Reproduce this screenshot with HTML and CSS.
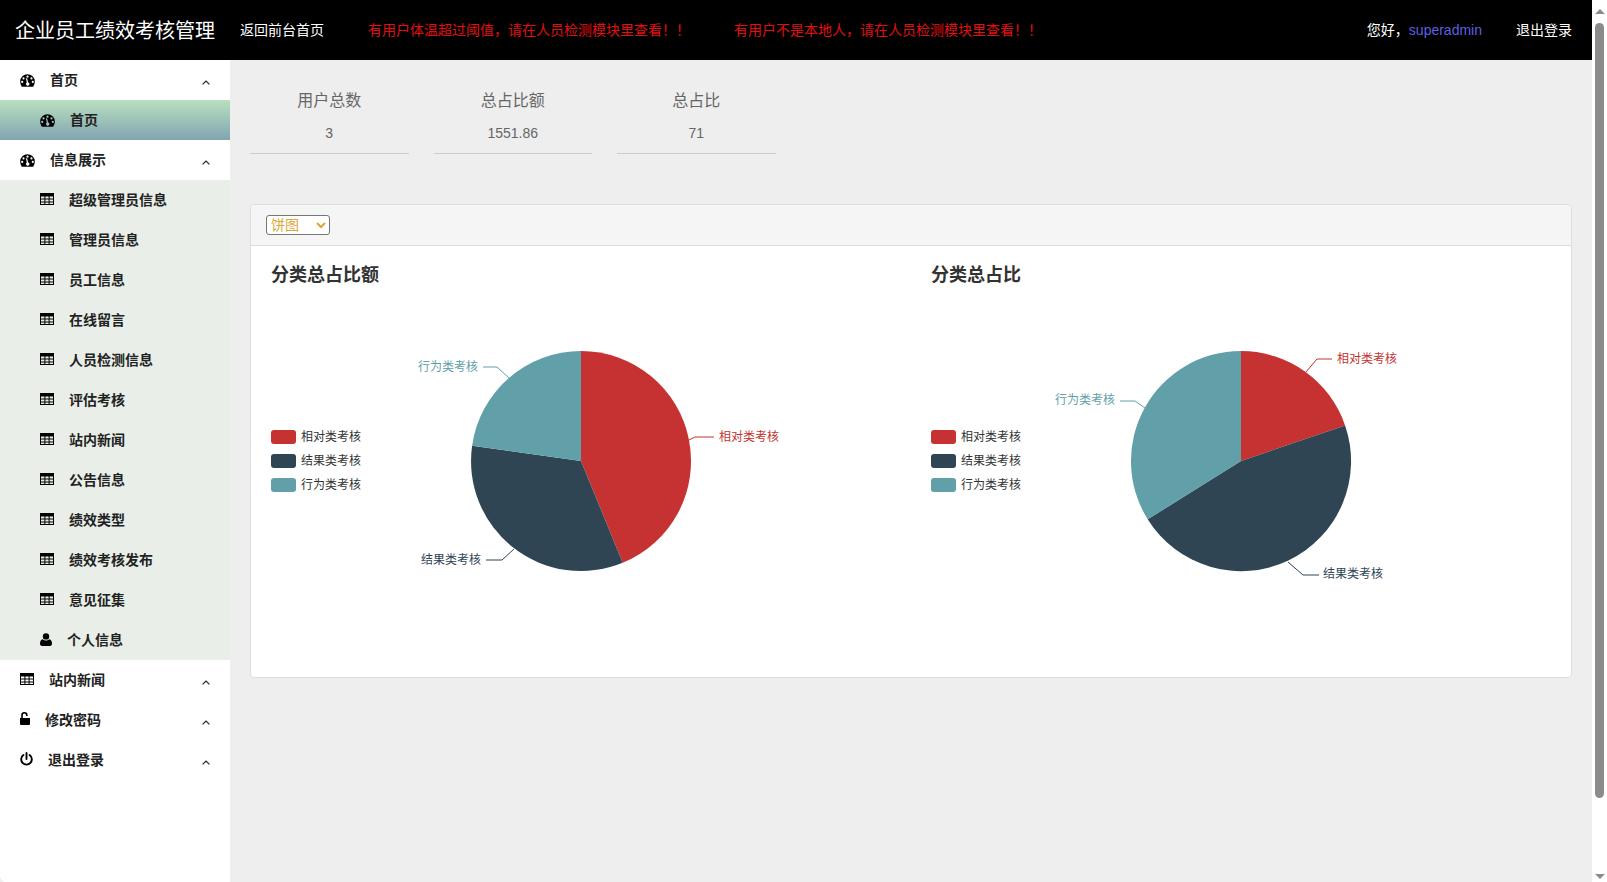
FILE: index.html
```html
<!DOCTYPE html>
<html lang="zh-CN">
<head>
  <meta charset="UTF-8">
  <title>企业员工绩效考核管理</title>
  <link rel="stylesheet" href="styles.css">
</head>
<body>
  <svg class="defs" width="0" height="0">
    <symbol id="i-gauge" viewBox="0 0 15 13">
      <path fill-rule="evenodd" d="M7.5 .2A7.3 7.3 0 0 0 .2 7.5c0 2 .6 3.9 1.8 5.3h11c1.2-1.4 1.8-3.3 1.8-5.3A7.3 7.3 0 0 0 7.5 .2zM7.5 1.6a1.1 1.1 0 1 1 0 2.2a1.1 1.1 0 1 1 0-2.2zM3.5 3.3a1.1 1.1 0 1 1 0 2.2a1.1 1.1 0 1 1 0-2.2zM11.5 3.3a1.1 1.1 0 1 1 0 2.2a1.1 1.1 0 1 1 0-2.2zM2.2 6.8a1.1 1.1 0 1 1 0 2.2a1.1 1.1 0 1 1 0-2.2zM12.8 6.8a1.1 1.1 0 1 1 0 2.2a1.1 1.1 0 1 1 0-2.2zM5.9 4.4l.9 4.2a1.7 1.7 0 1 0 1.3-.2l-1-4.2z"/>
    </symbol>
    <symbol id="i-table" viewBox="0 0 14 12">
      <path fill-rule="evenodd" d="M0 0h14v12H0zM1 3.5v2h3.4v-2zM5.4 3.5v2h3.2v-2zM9.6 3.5v2H13v-2zM1 6.5v2h3.4v-2zM5.4 6.5v2h3.2v-2zM9.6 6.5v2H13v-2zM1 9.5V11h3.4V9.5zM5.4 9.5V11h3.2V9.5zM9.6 9.5V11H13V9.5z"/>
    </symbol>
    <symbol id="i-user" viewBox="0 0 12 13">
      <circle cx="6" cy="3.4" r="3.2"/>
      <path d="M2.6 6.2C3.5 7 4.7 7.4 6 7.4s2.500-.4 3.400-1.200c1.700.3 2.600 2 2.600 4.600 0 1.300-.8 2.200-2 2.200H2c-1.200 0-2-.9-2-2.200 0-2.600.9-4.300 2.600-4.600z"/>
    </symbol>
    <symbol id="i-unlock" viewBox="0 0 10 13">
      <path d="M0 6h10v6a1 1 0 0 1-1 1H1a1 1 0 0 1-1-1z"/>
      <path d="M2 6V3.200a2.400 2.400 0 0 1 4.800 0V4" fill="none" stroke="#000" stroke-width="1.600"/>
    </symbol>
    <symbol id="i-power" viewBox="0 0 13 14">
      <path d="M3.400 3a5.300 5.300 0 1 0 6.200 0" fill="none" stroke="#000" stroke-width="1.900" stroke-linecap="round"/>
      <path d="M6.500 1v6" fill="none" stroke="#000" stroke-width="1.900" stroke-linecap="round"/>
    </symbol>
    <symbol id="i-up" viewBox="0 0 8 5">
      <path d="M.6 4.400L4 1l3.400 3.400" fill="none" stroke="#222" stroke-width="1.200"/>
    </symbol>
  </svg>

  <div class="app">
    <div class="page">
      <header class="topbar">
        <div class="brand">企业员工绩效考核管理</div>
        <a class="toplink">返回前台首页</a>
        <span class="warn warn-first">有用户体温超过阈值，请在人员检测模块里查看！！</span>
        <span class="warn warn-second">有用户不是本地人，请在人员检测模块里查看！！</span>
        <div class="userbox">
          <span>您好，<span class="username">superadmin</span></span>
          <a class="toplink">退出登录</a>
        </div>
      </header>

      <div class="layout">
        <nav class="sidebar">
          <a class="menu-item"><svg class="ic ic-gauge"><use href="#i-gauge"/></svg>首页<svg class="up"><use href="#i-up"/></svg></a>
          <div class="submenu">
            <a class="menu-item active"><svg class="ic ic-gauge"><use href="#i-gauge"/></svg>首页</a>
          </div>
          <a class="menu-item"><svg class="ic ic-gauge"><use href="#i-gauge"/></svg>信息展示<svg class="up"><use href="#i-up"/></svg></a>
          <div class="submenu">
            <a class="menu-item"><svg class="ic ic-table"><use href="#i-table"/></svg>超级管理员信息</a>
            <a class="menu-item"><svg class="ic ic-table"><use href="#i-table"/></svg>管理员信息</a>
            <a class="menu-item"><svg class="ic ic-table"><use href="#i-table"/></svg>员工信息</a>
            <a class="menu-item"><svg class="ic ic-table"><use href="#i-table"/></svg>在线留言</a>
            <a class="menu-item"><svg class="ic ic-table"><use href="#i-table"/></svg>人员检测信息</a>
            <a class="menu-item"><svg class="ic ic-table"><use href="#i-table"/></svg>评估考核</a>
            <a class="menu-item"><svg class="ic ic-table"><use href="#i-table"/></svg>站内新闻</a>
            <a class="menu-item"><svg class="ic ic-table"><use href="#i-table"/></svg>公告信息</a>
            <a class="menu-item"><svg class="ic ic-table"><use href="#i-table"/></svg>绩效类型</a>
            <a class="menu-item"><svg class="ic ic-table"><use href="#i-table"/></svg>绩效考核发布</a>
            <a class="menu-item"><svg class="ic ic-table"><use href="#i-table"/></svg>意见征集</a>
            <a class="menu-item"><svg class="ic ic-user"><use href="#i-user"/></svg>个人信息</a>
          </div>
          <a class="menu-item"><svg class="ic ic-table"><use href="#i-table"/></svg>站内新闻<svg class="up"><use href="#i-up"/></svg></a>
          <a class="menu-item"><svg class="ic ic-unlock"><use href="#i-unlock"/></svg>修改密码<svg class="up"><use href="#i-up"/></svg></a>
          <a class="menu-item"><svg class="ic ic-power"><use href="#i-power"/></svg>退出登录<svg class="up"><use href="#i-up"/></svg></a>
        </nav>

        <main class="content">
          <div class="stats">
            <div class="stat"><div class="stat-title">用户总数</div><div class="stat-value">3</div></div>
            <div class="stat"><div class="stat-title">总占比额</div><div class="stat-value">1551.86</div></div>
            <div class="stat"><div class="stat-title">总占比</div><div class="stat-value">71</div></div>
          </div>

          <section class="card">
            <div class="card-head">
              <select class="chart-type">
                <option>饼图</option>
                <option>柱状图</option>
              </select>
            </div>
            <div class="card-body">
              <div class="chart">
                <h3 class="chart-title">分类总占比额</h3>
                <svg class="pie" viewBox="0 0 640 357">
                  <rect x="0" y="130" width="25" height="14" rx="3" fill="#c63232"/>
                  <rect x="0" y="154" width="25" height="14" rx="3" fill="#2f4554"/>
                  <rect x="0" y="178" width="25" height="14" rx="3" fill="#61a0a8"/>
                  <text class="legend" x="30" y="141">相对类考核</text>
                  <text class="legend" x="30" y="165">结果类考核</text>
                  <text class="legend" x="30" y="189">行为类考核</text>
                  <path d="M310 161V51A110 110 0 0 1 351.700 262.800z" fill="#c63232"/>
                  <path d="M310 161L351.700 262.800A110 110 0 0 1 201.100 145.700z" fill="#2f4554"/>
                  <path d="M310 161L201.100 145.700A110 110 0 0 1 310 51z" fill="#61a0a8"/>
                  <path class="leader" d="M418 140l6-3h19" stroke="#c23531"/>
                  <path class="leader" d="M243 249l-12 11h-16" stroke="#2f4554"/>
                  <path class="leader" d="M238 78l-12-11h-14" stroke="#61a0a8"/>
                  <text class="label" x="448" y="141" fill="#c23531">相对类考核</text>
                  <text class="label" x="150" y="264" fill="#2f4554">结果类考核</text>
                  <text class="label" x="147" y="71" fill="#61a0a8">行为类考核</text>
                </svg>
              </div>
              <div class="chart">
                <h3 class="chart-title">分类总占比</h3>
                <svg class="pie" viewBox="0 0 640 357">
                  <rect x="0" y="130" width="25" height="14" rx="3" fill="#c63232"/>
                  <rect x="0" y="154" width="25" height="14" rx="3" fill="#2f4554"/>
                  <rect x="0" y="178" width="25" height="14" rx="3" fill="#61a0a8"/>
                  <text class="legend" x="30" y="141">相对类考核</text>
                  <text class="legend" x="30" y="165">结果类考核</text>
                  <text class="legend" x="30" y="189">行为类考核</text>
                  <path d="M310 161V51A110 110 0 0 1 414.100 125.400z" fill="#c63232"/>
                  <path d="M310 161L414.100 125.400A110 110 0 0 1 216.700 219.300z" fill="#2f4554"/>
                  <path d="M310 161L216.700 219.300A110 110 0 0 1 310 51z" fill="#61a0a8"/>
                  <path class="leader" d="M375 72l11-13h15" stroke="#c23531"/>
                  <path class="leader" d="M357 262l15 13h16" stroke="#2f4554"/>
                  <path class="leader" d="M214 108l-10-7h-15" stroke="#61a0a8"/>
                  <text class="label" x="406" y="63" fill="#c23531">相对类考核</text>
                  <text class="label" x="392" y="278" fill="#2f4554">结果类考核</text>
                  <text class="label" x="124" y="104" fill="#61a0a8">行为类考核</text>
                </svg>
              </div>
            </div>
          </section>
        </main>
      </div>
    </div>

    <div class="scrollbar">
      <span class="arrow arrow-up"></span>
      <span class="thumb"></span>
      <span class="arrow arrow-down"></span>
    </div>
  </div>
</body>
</html>
```

FILE: styles.css
```css
html, body {
  margin: 0;
  height: 100%;
  overflow: hidden;
}
body {
  font-family: "Liberation Sans", "Noto Sans CJK SC", sans-serif;
  font-size: 14px;
  color: #333;
  background: #fff;
}
.defs {
  position: absolute;
}
.app {
  display: flex;
  height: 882px;
}
.page {
  flex: 1;
  min-width: 0;
  display: flex;
  flex-direction: column;
}

/* top bar */
.topbar {
  height: 60px;
  box-sizing: border-box;
  background: #000;
  color: #fff;
  display: flex;
  align-items: center;
  padding: 0 20px 2px 15px;
  flex-shrink: 0;
}
.brand {
  font-size: 20px;
  width: 225px;
}
.toplink {
  color: #fff;
}
.warn {
  color: #e01010;
}
.warn-first {
  margin-left: 44px;
}
.warn-second {
  margin-left: 44px;
}
.userbox {
  margin-left: auto;
  display: flex;
  gap: 34px;
}
.username {
  color: #5f5fe0;
}

/* sidebar */
.layout {
  flex: 1;
  display: flex;
  background: #eee;
}
.sidebar {
  width: 230px;
  flex-shrink: 0;
  background: #fff;
  border-bottom-left-radius: 6px;
}
.menu-item {
  height: 40px;
  box-sizing: border-box;
  display: flex;
  align-items: center;
  gap: 15px;
  padding-left: 20px;
  padding-bottom: 2px;
  font-weight: 700;
  color: #222;
}
.submenu {
  background: #e9efe8;
}
.submenu .menu-item {
  padding-left: 40px;
}
.menu-item.active {
  background: linear-gradient(#b9dfc0, #81a5b0);
}
.ic {
  flex-shrink: 0;
  fill: #000;
}
.ic-gauge {
  width: 15px;
  height: 13px;
  margin-top: 2px;
}
.ic-table {
  width: 14px;
  height: 12px;
}
.ic-user {
  width: 12px;
  height: 13px;
  margin-top: 1px;
}
.ic-unlock {
  width: 10px;
  height: 13px;
  margin-top: -1px;
}
.ic-power {
  width: 13px;
  height: 14px;
}
.up {
  width: 8px;
  height: 5px;
  margin-left: auto;
  margin-right: 20px;
  margin-top: 6px;
}

/* main area */
.content {
  flex: 1;
  min-width: 0;
  padding: 20px;
}
.stats {
  display: flex;
  gap: 25px;
}
.stat {
  width: 158.5px;
  text-align: center;
  color: #666;
  border-bottom: 1px solid #ccc;
  padding-bottom: 7px;
}
.stat-title {
  font-size: 16px;
  height: 40px;
  line-height: 42px;
}
.stat-value {
  line-height: 26px;
}
.card {
  margin-top: 50px;
  height: 474px;
  box-sizing: border-box;
  background: #fff;
  border: 1px solid #ddd;
  border-radius: 4px;
}
.card-head {
  height: 41px;
  box-sizing: border-box;
  background: #f5f5f5;
  border-bottom: 1px solid #ddd;
  border-radius: 4px 4px 0 0;
  display: flex;
  align-items: center;
  padding-left: 15px;
}
.chart-type {
  width: 64px;
  height: 20px;
  font-size: 14px;
  font-family: inherit;
  color: #dca63a;
  background: #fff;
  border: 1px solid #767676;
  border-radius: 3px;
  padding: 0;
}
.card-body {
  display: flex;
  padding: 19px 20px 20px;
}
.chart {
  width: 660px;
  flex-shrink: 0;
}
.chart-title {
  margin: 0 0 15px;
  font-size: 18px;
  line-height: 20px;
  font-weight: 700;
  color: #333;
}
.pie {
  display: block;
  width: 640px;
  height: 357px;
}
.pie text {
  font-size: 12px;
  font-family: "Liberation Sans", "Noto Sans CJK SC", sans-serif;
}
.pie .legend {
  fill: #333;
}
.leader {
  fill: none;
  stroke-width: 1;
}

/* fake scrollbar, the page itself does not scroll */
.scrollbar {
  width: 15px;
  flex-shrink: 0;
  position: relative;
  background: #fff;
}
.thumb {
  position: absolute;
  left: 3px;
  top: 23px;
  width: 9px;
  height: 775px;
  border-radius: 5px;
  background: #8b8b8b;
}
.arrow {
  position: absolute;
  left: 3px;
  width: 0;
  height: 0;
  border-left: 5px solid transparent;
  border-right: 5px solid transparent;
}
.arrow-up {
  top: 9px;
  border-bottom: 5px solid #8b8b8b;
}
.arrow-down {
  bottom: 3px;
  border-top: 5px solid #8b8b8b;
}
```
